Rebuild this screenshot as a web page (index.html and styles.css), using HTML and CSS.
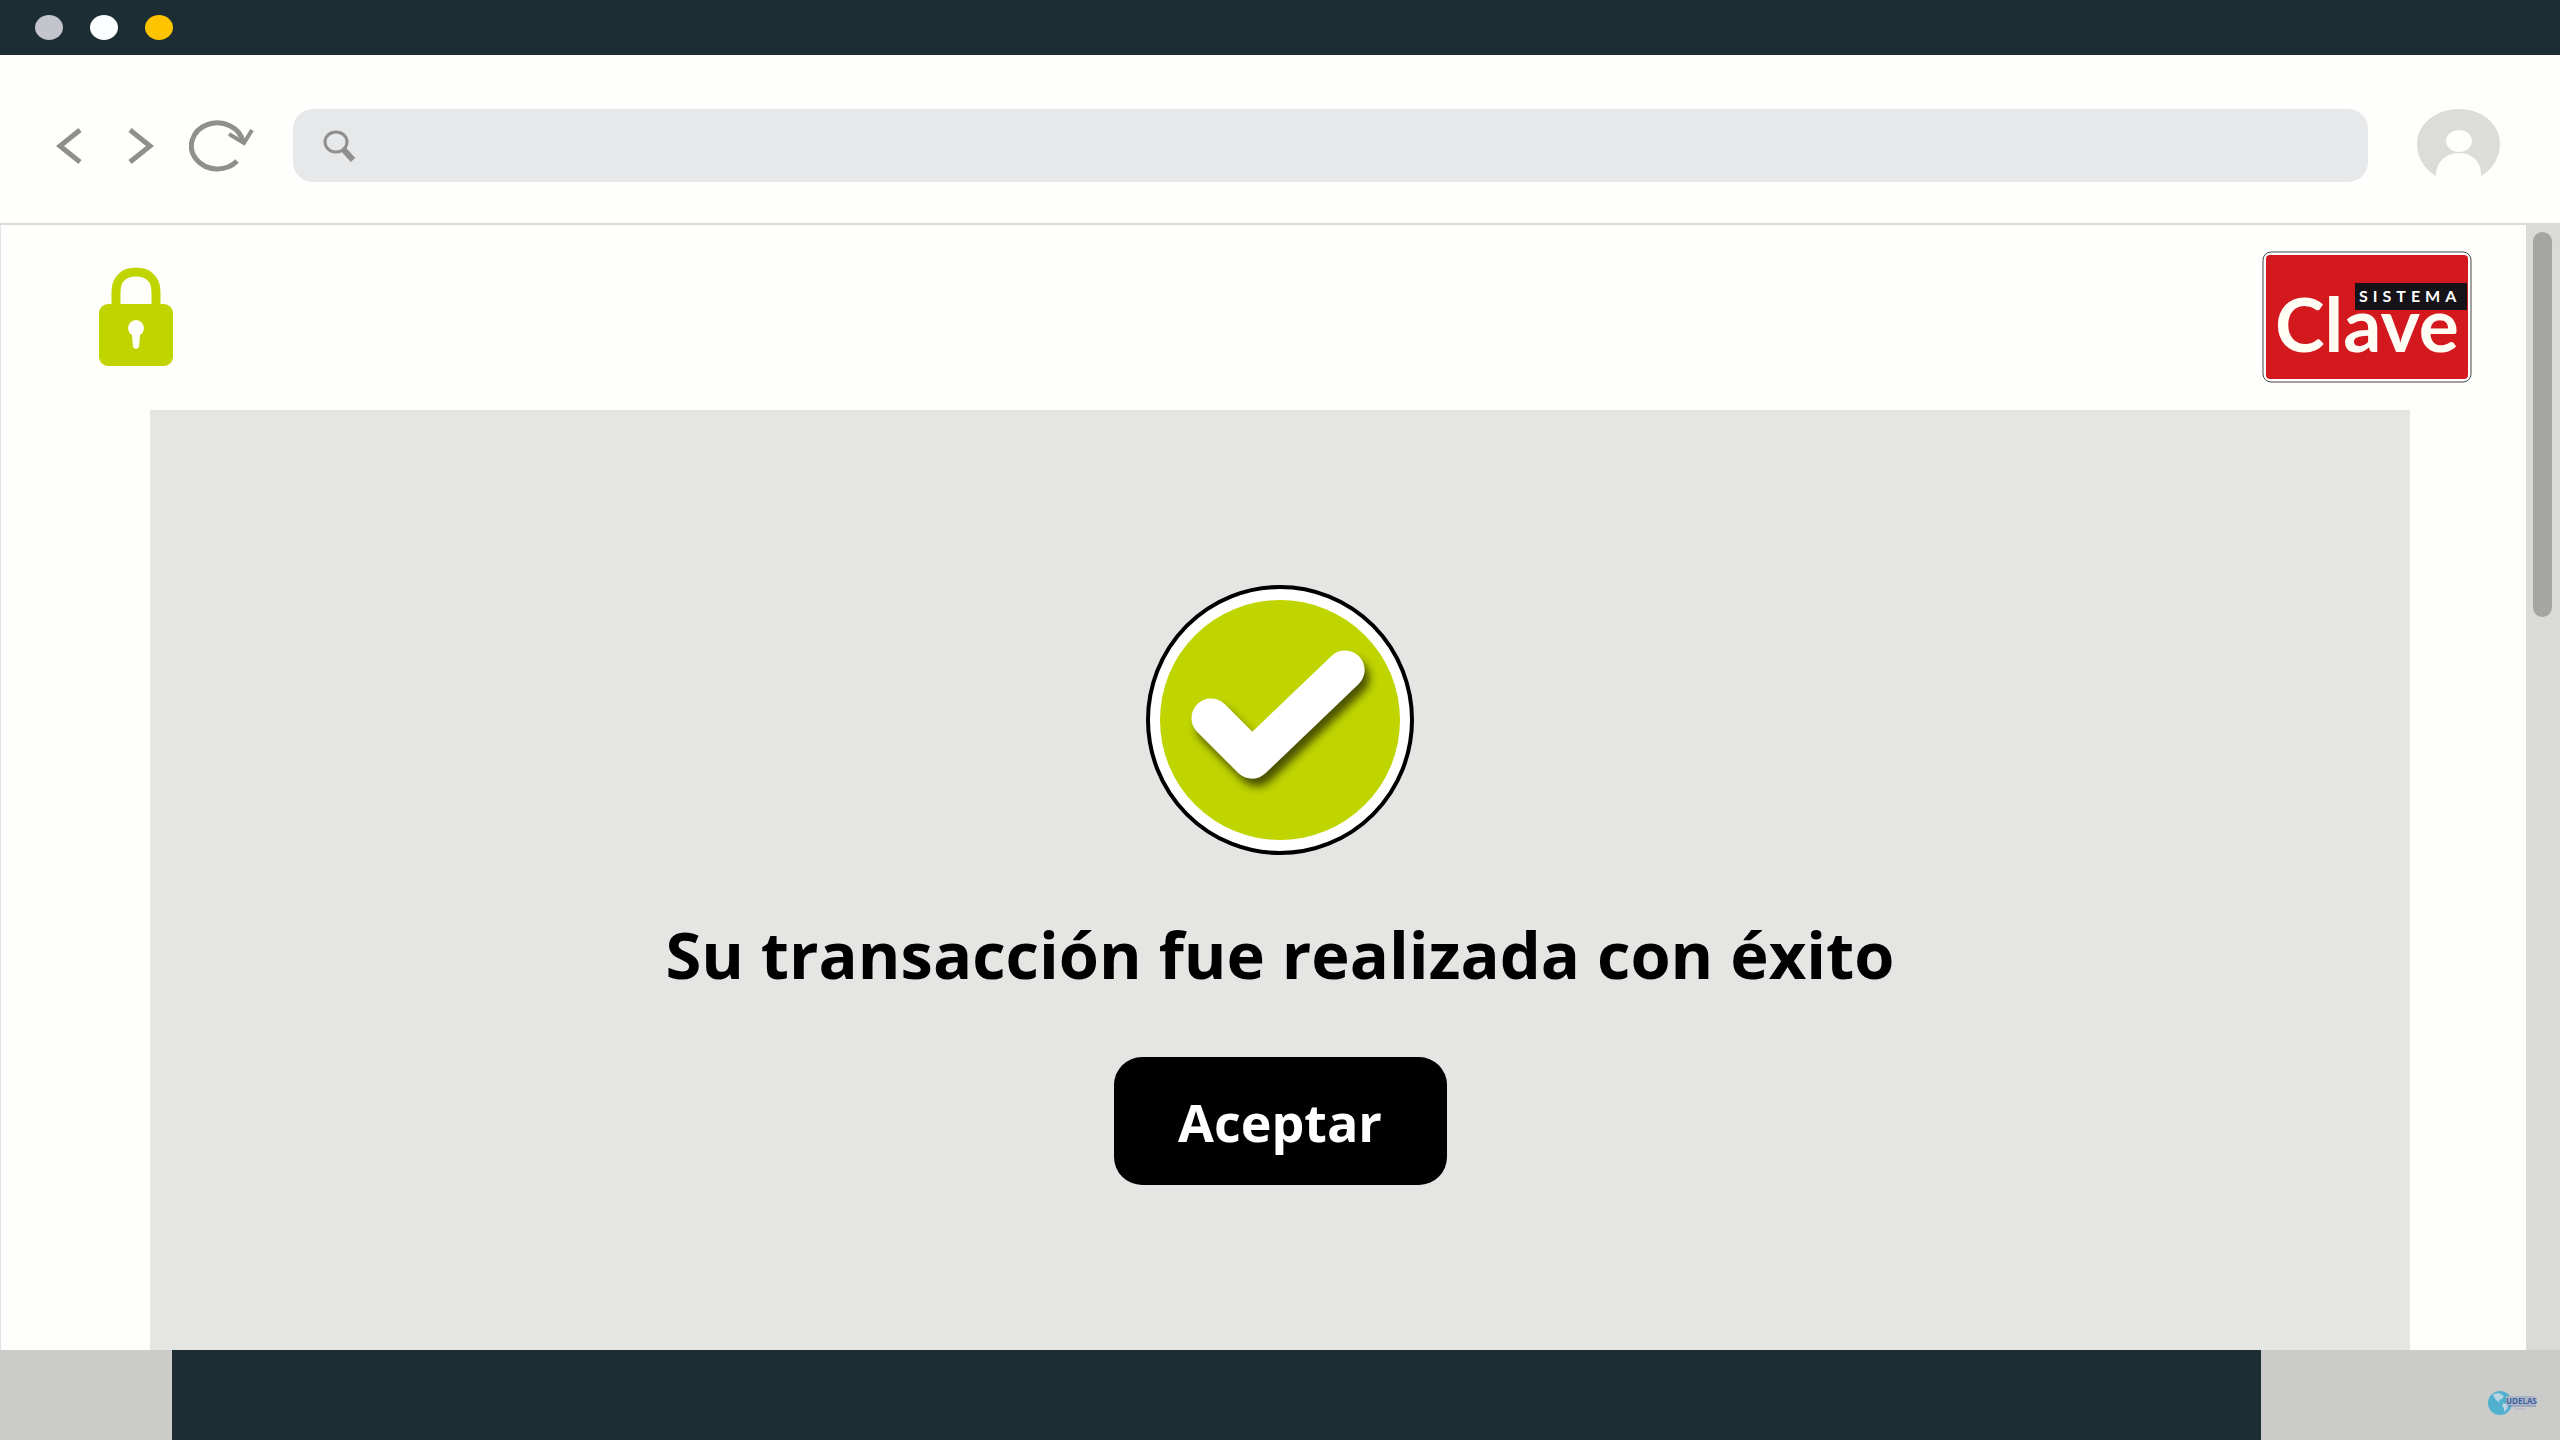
FILE: index.html
```html
<!DOCTYPE html>
<html lang="es">

<head>
    <meta charset="UTF-8">
    <title>Sistema Clave</title>
    <link rel="stylesheet" href="styles.css">
</head>

<body>

    <div class="window">
        <!-- title bar -->
        <div class="titlebar">
            <span class="dot dot-gray"></span>
            <span class="dot dot-white"></span>
            <span class="dot dot-yellow"></span>
        </div>

        <!-- toolbar -->
        <div class="toolbar">
            <button type="button" class="nav-btn btn-back" aria-label="Atrás">
                <svg width="26" height="38" viewBox="0 0 26 38"><path d="M24 3 L4 19 L24 35" /></svg>
            </button>
            <button type="button" class="nav-btn btn-next" aria-label="Adelante">
                <svg width="26" height="38" viewBox="0 0 26 38"><path d="M2 3 L22 19 L2 35" /></svg>
            </button>
            <button type="button" class="nav-btn btn-reload" aria-label="Recargar">
                <svg width="66" height="54" viewBox="0 0 66 54">
                    <path class="ring" d="M48 42 A26 23 0 1 1 54 23" />
                    <path class="tip" d="M40 15 L55 24 L63 11" />
                </svg>
            </button>
            <div class="address">
                <svg width="34" height="34" viewBox="0 0 34 34">
                    <ellipse cx="13" cy="13" rx="11" ry="10" />
                    <path d="M19 20 L22 22" />
                    <path class="handle" d="M21 21 L30 31" />
                </svg>
                <input type="text" class="address-input" aria-label="Dirección">
            </div>
            <button type="button" class="nav-btn btn-user" aria-label="Usuario">
                <svg width="84" height="74" viewBox="0 0 84 74">
                    <path class="user-bg" d="M19 67 C7 60 0 48 0 35 C0 15 19 0 42 0 C65 0 83 15 83 35 C83 48 76 60 64 67 C65 54 56 44 42 44 C28 44 19 54 19 67 Z" />
                    <ellipse class="user-head" cx="42" cy="32" rx="13" ry="11" />
                </svg>
            </button>
        </div>

        <!-- page -->
        <div class="viewport">
            <div class="page">
                <header class="page-header">
                    <svg class="lock" width="76" height="100" viewBox="0 0 76 100">
                        <path class="shackle" d="M18 40 V25 C18 12 26 5 38 5 C50 5 58 12 58 25 V40" />
                        <rect x="1" y="37" width="74" height="62" rx="9" />
                        <path class="keyhole" d="M34 68 A8 8 0 1 1 42 68 L41 80 Q38 84 35 80 Z" />
                    </svg>
                    <svg class="clave" width="210" height="132" viewBox="0 0 210 132">
                        <rect class="clave-border" x="1" y="1" width="208" height="130" rx="8" />
                        <rect class="clave-bg" x="4" y="4" width="202" height="124" rx="4" />
                        <rect class="clave-band" x="93" y="32" width="112" height="27" />
                        <text class="clave-small" x="97" y="51">SISTEMA</text>
                        <text class="clave-big" x="13" y="101">Clave</text>
                    </svg>
                </header>

                <main class="panel">
                    <svg class="check" width="270" height="272" viewBox="0 0 270 272">
                        <defs>
                            <filter id="shadow" filterUnits="userSpaceOnUse" x="0" y="0" width="270" height="272">
                                <feDropShadow dx="5" dy="8" stdDeviation="4" flood-color="#2c3000" flood-opacity="0.8" />
                            </filter>
                        </defs>
                        <ellipse class="check-ring" cx="135" cy="136" rx="132" ry="133" />
                        <ellipse class="check-disc" cx="135" cy="136" rx="120" ry="120" />
                        <path class="check-mark" filter="url(#shadow)" d="M66 134 L107 175 L200 86" />
                    </svg>
                    <h1 class="message">Su transacción fue realizada con éxito</h1>
                    <button type="button" class="btn-accept">Aceptar</button>
                </main>
            </div>
            <div class="scrollbar">
                <div class="thumb"></div>
            </div>
        </div>

        <!-- bottom bar -->
        <footer class="bottom">
            <div class="bottom-dark"></div>
            <svg class="udelas" width="50" height="26" viewBox="0 0 50 26">
                <circle class="globe" cx="13" cy="13" r="12" />
                <path class="land" d="M6 4 L12 3 L17 6 L15 9 L12 10 L13 13 L9 10 L7 7 Z M16 13 L22 15 L20 19 L17 22 L17 18 L15 16 Z" />
                <rect class="udelas-band" x="19" y="6" width="29" height="9" />
                <text class="udelas-text" x="19" y="14">UDELAS</text>
                <path class="udelas-line" d="M20 16 H49" />
                <path class="udelas-dots" d="M28 19 H38" />
            </svg>
        </footer>
    </div>

</body>

</html>
```
FILE: styles.css
```css
* {
    padding: 0;
    margin: 0;
    box-sizing: border-box;
}

body {
    background-color: #fefefd;
    font-family: "Comic Sans MS", "Open Sans", sans-serif;
}

svg {
    display: block;
    flex: none;
}

button {
    border: none;
    background: none;
    font-family: inherit;
    cursor: pointer;
}

.window {
    display: flex;
    flex-direction: column;
    min-height: 100vh;
}

/* title bar */
.titlebar {
    display: flex;
    align-items: center;
    gap: 27px;
    height: 55px;
    padding-left: 35px;
    background-color: #1c2d33;
}

.dot {
    width: 28px;
    height: 25px;
    border-radius: 50%;
}

.dot-gray {
    background-color: #c4c4cc;
}

.dot-white {
    background-color: #fbffff;
}

.dot-yellow {
    background-color: #ffc400;
}

/* toolbar */
.toolbar {
    display: flex;
    align-items: center;
    height: 170px;
    padding: 13px 59px 0 56px;
    border-bottom: 2px solid #dadad9;
}

.nav-btn svg {
    fill: none;
    stroke: #8f8f8e;
    stroke-width: 5;
}

.btn-next {
    margin-left: 46px;
}

.btn-reload {
    margin: 0 38px 0 35px;
}

.btn-reload .tip {
    stroke-width: 4;
}

.address {
    display: flex;
    flex: 1;
    align-items: center;
    height: 73px;
    padding: 0 30px;
    border-radius: 20px;
    background-color: #e7e8ea;
}

.address svg {
    fill: none;
    stroke: #8f8f8e;
    stroke-width: 3;
}

.address .handle {
    stroke-width: 6;
}

.address-input {
    flex: 1;
    height: 50px;
    margin-left: 20px;
    border: none;
    outline: none;
    background: none;
    font-size: 28px;
}

.btn-user {
    margin-left: 49px;
}

.btn-user .user-bg {
    fill: #dcdcdb;
    stroke: none;
}

.btn-user .user-head {
    fill: #fefefd;
    stroke: none;
}

/* page */
.viewport {
    display: flex;
    flex: 1;
}

.page {
    display: flex;
    flex: 1;
    flex-direction: column;
    border-left: 1px solid #e4e4e4;
}

.page-header {
    display: flex;
    align-items: center;
    justify-content: space-between;
    padding: 26px 54px 27px 97px;
}

.lock {
    fill: #c0d500;
}

.lock .shackle {
    fill: none;
    stroke: #c0d500;
    stroke-width: 9;
}

.lock .keyhole {
    fill: #fefefd;
}

.clave-border {
    fill: #fff;
    stroke: #444;
    stroke-width: 1;
}

.clave-bg {
    fill: #d3181e;
}

.clave-band {
    fill: #151318;
}

.clave-small {
    fill: #fff;
    font: bold 16px Lato, sans-serif;
    letter-spacing: 5px;
}

.clave-big {
    fill: #fffef5;
    font: bold 75px Lato, sans-serif;
}

.panel {
    display: flex;
    flex: 1;
    flex-direction: column;
    align-items: center;
    margin: 0 116px 0 149px;
    padding: 174px 0 100px;
    background-color: #e5e5e4;
}

.check-ring {
    fill: #fff;
    stroke: #000;
    stroke-width: 4;
}

.check-disc {
    fill: #c0d500;
}

.check-mark {
    fill: none;
    stroke: #fff;
    stroke-width: 39;
    stroke-linecap: round;
    stroke-linejoin: round;
}

.message {
    margin: 48px 0 53px;
    font-size: 65px;
    line-height: 100px;
    font-weight: bold;
    text-align: center;
    color: #000;
}

.btn-accept {
    width: 333px;
    height: 128px;
    border-radius: 28px;
    background-color: #000;
    color: #fff;
    font-size: 52px;
    font-weight: bold;
}

.scrollbar {
    width: 34px;
    padding: 7px 8px 0 7px;
    background-color: #dadad9;
}

.thumb {
    height: 385px;
    border-radius: 10px;
    background-color: #a5a5a4;
}

/* bottom bar */
.bottom {
    display: flex;
    align-items: center;
    height: 90px;
    padding: 0 23px 0 172px;
    background-color: #cbcbca;
}

.bottom-dark {
    flex: 1;
    align-self: stretch;
    margin-right: 226px;
    background-color: #1c2d33;
}

.udelas {
    margin-top: 16px;
}

.globe {
    fill: #4fb0cf;
}

.land {
    fill: #b9d3e2;
}

.udelas-band {
    fill: #a9b4c8;
}

.udelas-text {
    fill: #41609c;
    font: bold 8px "Open Sans", sans-serif;
}

.udelas-line {
    stroke: #6f87b4;
    stroke-width: 1;
}

.udelas-dots {
    stroke: #a3afc4;
    stroke-width: 1;
}
```
